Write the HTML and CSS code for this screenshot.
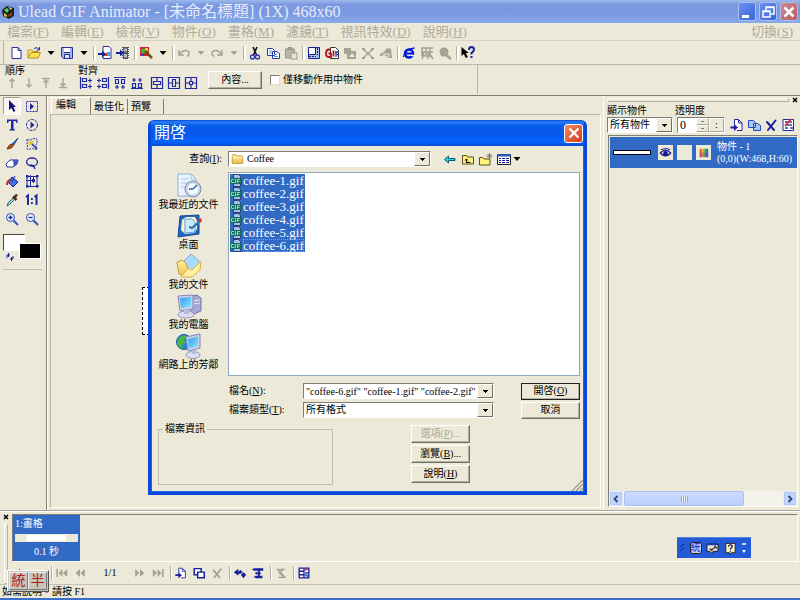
FILE: index.html
```html
<!DOCTYPE html>
<html lang="zh-Hant">
<head>
<meta charset="utf-8">
<title>Ulead GIF Animator - [未命名標題] (1X) 468x60</title>
<link rel="stylesheet" href="styles.css">
</head>
<body>
<svg class="sprite" aria-hidden="true">
  <defs>
    <linearGradient id="screen" x1="0" y1="0" x2="1" y2="1"><stop offset="0" stop-color="#2f9df0"/><stop offset="1" stop-color="#8fe4ff"/></linearGradient>
    <linearGradient id="folder" x1="0" y1="0" x2="0" y2="1"><stop offset="0" stop-color="#fff3a8"/><stop offset="1" stop-color="#eebc4c"/></linearGradient>
    <linearGradient id="rainbow"><stop offset="0" stop-color="#f03030"/><stop offset=".35" stop-color="#e8c030"/><stop offset=".65" stop-color="#30b850"/><stop offset="1" stop-color="#3048e0"/></linearGradient>
  </defs>
  <symbol id="page" viewBox="0 0 16 16"><path d="M4 2.500h6l3 3v8H4z" fill="#fff" stroke="#2a2f9c"/><path d="M10 2.500v3h3" fill="none" stroke="#2a2f9c"/></symbol>
  <symbol id="open" viewBox="0 0 16 16"><path d="M2 13V5h4l1 1.500h5V8" fill="#ffe98a" stroke="#b8921c"/><path d="M2 13l3-5.500h9.500L12 13z" fill="#ffe14a" stroke="#b8921c"/><path d="M8 3.500q3-2 5 .5M13.500 2v3h-3" fill="none" stroke="#2a2f9c"/></symbol>
  <symbol id="save" viewBox="0 0 16 16"><path d="M2.500 2.500h11v11h-9l-2-2z" fill="#9cb8ea" stroke="#2a2f9c"/><path d="M5 3h6v4H5z" fill="#fff"/><path d="M5 7.500h6M5.500 13V9.500h5V13" fill="#dfe6f6" stroke="#2a2f9c"/></symbol>
  <symbol id="down" viewBox="0 0 16 16"><path d="M4.500 6h7L8 10z" fill="currentColor"/></symbol>
  <symbol id="addimg" viewBox="0 0 16 16"><path d="M6 1.500h6l2 2v10H6z" fill="#fff" stroke="#2a2f9c"/><path d="M7 8h4v3H7z" fill="#e03a2a"/><path d="M10 7h3v4h-3z" fill="#30a8e0"/><path d="M1 8h4V5.500L9 9l-4 3.500V10H1z" fill="#18209c"/></symbol>
  <symbol id="addfilm" viewBox="0 0 16 16"><path d="M7 2h7v12H7z" fill="#555"/><path d="M9 3.500h3v3H9zM9 9h3v3.500H9z" fill="#b8bcc8"/><path d="M7.500 3v11M13.500 3v11" stroke="#fff" stroke-dasharray="1 1"/><path d="M1 7h4V4.500L9 8l-4 3.500V9H1z" fill="#18209c"/></symbol>
  <symbol id="wizard" viewBox="0 0 16 16"><path d="M2 2h9v9H2z" fill="#c82828"/><path d="M3 4h4v4H3z" fill="#28c040"/><path d="M7 3h3v3H7z" fill="#f0d020"/><path d="M3 9h3v2H3z" fill="#3048d8"/><path d="M7 6l7 7" stroke="#7a4a18" stroke-width="2.500"/></symbol>
  <symbol id="undo" viewBox="0 0 16 16"><path d="M3 5v5h5M3.500 9.500Q6 5.500 10 5.500q4 1 3 4l-2 2" fill="none" stroke="currentColor" stroke-width="1.500"/></symbol>
  <symbol id="redo" viewBox="0 0 16 16"><path d="M13 5v5H8M12.500 9.500Q10 5.500 6 5.500q-4 1-3 4l2 2" fill="none" stroke="currentColor" stroke-width="1.500"/></symbol>
  <symbol id="cut" viewBox="0 0 16 16"><path d="M6 2l3.500 8M10 2L6.500 10" stroke="#111" stroke-width="1.600"/><circle cx="5.500" cy="12" r="2" fill="none" stroke="#2a38b0" stroke-width="1.300"/><circle cx="10.500" cy="12" r="2" fill="none" stroke="#2a38b0" stroke-width="1.300"/></symbol>
  <symbol id="copy" viewBox="0 0 16 16"><path d="M2.500 3.500h5l2 2v5h-7zM7.500 6.500h4l3 2v5h-7z" fill="#fff" stroke="#2a38b0"/><path d="M4 6h3M4 8h3M9 9.500h3M9 11.500h4" stroke="#4aa0d8"/></symbol>
  <symbol id="paste" viewBox="0 0 16 16"><path d="M2.500 4h9v9h-9zM5 2.500h4v2H5z" fill="#b8b5a6" stroke="#9a978a"/><path d="M8 8h6v6H8z" fill="#e6e3d4" stroke="#9a978a"/></symbol>
  <symbol id="panelic" viewBox="0 0 16 16"><path d="M2.500 2.500h11v11h-11z" fill="#a8bcec" stroke="#1a2090"/><path d="M2.500 2.500h7v7h-7z" fill="#fff" stroke="#1a2090"/><path d="M11.500 3v7M3 11.500h7" stroke="#1a2090" stroke-dasharray="2 1"/></symbol>
  <symbol id="gifopt" viewBox="0 0 16 16"><path d="M6.500 2.500h5l3 3v8h-8z" fill="#fff" stroke="#333"/><path d="M7 4.500H4.500Q2 5 2 8.500T4.500 12H7V8.500H4.500" fill="none" stroke="#b01820" stroke-width="1.800"/><path d="M9.500 5.500v6" stroke="#b01820" stroke-width="1.800"/><path d="M12 12V7M11 7h3M12 9.500h2" stroke="#2840c0" stroke-width="1.300"/></symbol>
  <symbol id="grayimg" viewBox="0 0 16 16"><path d="M2 3h7v3h5v8H5V9H2z" fill="#a5a294"/><path d="M7 12l3-4 3 4z" fill="#eceadb"/></symbol>
  <symbol id="cross" viewBox="0 0 16 16"><path d="M3 4l10 9M13 4L3 13" stroke="#a5a294" stroke-width="1.500"/><path d="M2 3h3v2H2zM11 3h3v2h-3zM2 12h3v2H2zM11 12h3v2h-3z" fill="#a5a294"/></symbol>
  <symbol id="graycloud" viewBox="0 0 16 16"><path d="M2 9l4-2 3-4 4 1 1 9H9l-2-3-5 1z" fill="#a5a294"/><path d="M5 9h6v3H8" fill="none" stroke="#eceadb"/></symbol>
  <symbol id="ie" viewBox="0 0 16 16"><circle cx="8" cy="8.500" r="4" fill="none" stroke="#0018d8" stroke-width="2.500"/><path d="M5 8.500h7" stroke="#0018d8" stroke-width="2"/><path d="M2.500 12Q4 4 13.500 3" fill="none" stroke="#0018d8" stroke-width="1.300"/><path d="M10 10.500h4" stroke="#ece9d8" stroke-width="1.500"/></symbol>
  <symbol id="graygrid" viewBox="0 0 16 16"><path d="M2 3h12M2 7h12M3 3v8M7 3v8M11 3v8M5 7l-2 7M9 8v6M10 8l4 6M3 11h10" stroke="#a5a294" stroke-width="1.500"/></symbol>
  <symbol id="grayglobe" viewBox="0 0 16 16"><circle cx="7" cy="7" r="4.500" fill="#a5a294"/><path d="M8 9l6 5M4 10h7" stroke="#a5a294" stroke-width="2.500"/></symbol>
  <symbol id="help" viewBox="0 0 16 16"><path d="M1.500 2v9l2.300-2 2 4 2-1-2-4h3z" fill="#000"/><path d="M9 5q0-3 2.500-3T14 4.500Q14 6 11.500 8v1.500M11.500 11v2" fill="none" stroke="#18209c" stroke-width="2"/></symbol>

  <symbol id="up1" viewBox="0 0 16 16"><path d="M8 13V4M5.500 6.500L8 4l2.500 2.500" fill="none" stroke="#aaa799" stroke-width="1.500"/></symbol>
  <symbol id="dn1" viewBox="0 0 16 16"><path d="M8 3v9M5.500 9.500L8 12l2.500-2.500" fill="none" stroke="#aaa799" stroke-width="1.500"/></symbol>
  <symbol id="up2" viewBox="0 0 16 16"><path d="M4 3.500h8M8 13V5M5.500 7.500L8 5l2.500 2.500" fill="none" stroke="#aaa799" stroke-width="1.500"/></symbol>
  <symbol id="dn2" viewBox="0 0 16 16"><path d="M4 12.500h8M8 3v8M5.500 8.500L8 11l2.500-2.500" fill="none" stroke="#aaa799" stroke-width="1.500"/></symbol>
  <symbol id="alL" viewBox="0 0 16 16"><path d="M2.500 2v12M4.500 3.500h4v3h-4zM4.500 9.500h4v3h-4zM10 5.500h4M12 3.500v4M10 11.500h4M12 9.500v4" fill="none" stroke="#2028a0" stroke-width="1.200"/></symbol>
  <symbol id="alR" viewBox="0 0 16 16"><path d="M13.500 2v12M7.500 3.500h4v3h-4zM7.500 9.500h4v3h-4zM2 5.500h4M4 3.500v4M2 11.500h4M4 9.500v4" fill="none" stroke="#2028a0" stroke-width="1.200"/></symbol>
  <symbol id="alT" viewBox="0 0 16 16"><path d="M2 2.500h12M3.500 4.500h3v4h-3zM9.500 4.500h3v4h-3zM5 10v4M3 12h4M11 10v4M9 12h4" fill="none" stroke="#2028a0" stroke-width="1.200"/></symbol>
  <symbol id="alB" viewBox="0 0 16 16"><path d="M2 13.500h12M3.500 8.500h3v4h-3zM9.500 8.500h3v4h-3zM5 3v4M3 5h4M11 3v4M9 5h4" fill="none" stroke="#2028a0" stroke-width="1.200"/></symbol>
  <symbol id="ceV" viewBox="0 0 16 16"><path d="M2.500 2.500h11v11h-11zM4.500 6.500h7v3h-7zM8 3v3M8 10v3" fill="none" stroke="#2028a0" stroke-width="1.200"/></symbol>
  <symbol id="ceH" viewBox="0 0 16 16"><path d="M2.500 2.500h11v11h-11zM6.500 4.500h3v7h-3zM3 8h3M10 8h3" fill="none" stroke="#2028a0" stroke-width="1.200"/></symbol>
  <symbol id="ceB" viewBox="0 0 16 16"><path d="M2.500 2.500h11v11h-11zM6.500 6.500h3v3h-3zM3 8h3M10 8h3M8 3v3M8 10v3" fill="none" stroke="#2028a0" stroke-width="1.200"/></symbol>

  <symbol id="tPick" viewBox="0 0 16 16"><path d="M5 2v10l2.500-2 2 4 1.800-1-1.900-4H12z" fill="#10187c"/></symbol>
  <symbol id="tMarq" viewBox="0 0 16 16"><path d="M2.500 3.500h11v10h-11z" fill="none" stroke="#2028a0" stroke-dasharray="2 1"/><path d="M6 5v7l4-3.500z" fill="#2028a0"/></symbol>
  <symbol id="tEll" viewBox="0 0 16 16"><circle cx="8" cy="8" r="5.500" fill="none" stroke="#2028a0" stroke-dasharray="3 1"/><path d="M6.500 4.500v7l4-3.500z" fill="#2028a0"/></symbol>
  <symbol id="tText" viewBox="0 0 16 16"><path d="M3 6V2.500h10.500V6h-1L11.500 4H9.500v8l1.500.5v1H5.500v-1L7 12V4H5L4 6z" fill="#2028b0"/></symbol>
  <symbol id="tBrush" viewBox="0 0 16 16"><path d="M14 2L8 8l1.500 1.500z" fill="#3a6fd0" stroke="#2a4a98"/><path d="M8 8q-3 0-5 5 5 0 6.500-3.500z" fill="#b8541c" stroke="#7a3010"/></symbol>
  <symbol id="tWand" viewBox="0 0 16 16"><path d="M3 3q2 2 5 0 3-1 5 0v4q-2 2 0 6-3 1-5-1-3 2-5 1 1-3 0-5z" fill="none" stroke="#2028a0" stroke-dasharray="2 1"/><path d="M7 4v6M4 7h6M5 5l4 4M9 5L5 9" stroke="#e0c020"/><path d="M8 8l5 5" stroke="#2028a0" stroke-width="1.500"/></symbol>
  <symbol id="tErase" viewBox="0 0 16 16"><path d="M6 5h8l-1 4-4 3H3L2 9z" fill="#fff" stroke="#2a2f9c"/><path d="M9 5h5l-1 4-3.500 2.500V8.500z" fill="#3858c8"/></symbol>
  <symbol id="tLasso" viewBox="0 0 16 16"><ellipse cx="8" cy="7" rx="5.500" ry="4" fill="none" stroke="#2028a0" stroke-width="1.300"/><path d="M6 10q4 0 5 4" fill="none" stroke="#2028a0" stroke-width="1.300"/></symbol>
  <symbol id="tFill" viewBox="0 0 16 16"><path d="M8 4l6 5-5 5-5-5z" fill="#3a78e0" stroke="#18209c"/><path d="M8 9l3-6" stroke="#18209c"/><path d="M6 6q-4 1-4 6l2 0q0-3 3-4z" fill="#c82830"/></symbol>
  <symbol id="tTrans" viewBox="0 0 16 16"><path d="M3 3.500h10v10H3zM6.500 2v12M2 7.500h8M9.500 4v6" fill="none" stroke="#2028a0"/><path d="M2 2h2.500v2.500H2zM12 2h2.500v2.500H12zM2 12h2.500v2.500H2zM12 12h2.500v2.500H12zM8 6h3v3H8z" fill="#2028a0"/></symbol>
  <symbol id="tDrop" viewBox="0 0 16 16"><path d="M3 14l1-3 5-5 1.500 1.500-5 5z" fill="#9ad8d8" stroke="#2c6a70"/><path d="M9 4.500L12.500 8M10 6l3-3.500" stroke="#5c2a14" stroke-width="2.500"/></symbol>
  <symbol id="tOne" viewBox="0 0 16 16"><path d="M2 5l2-1.500V13M10.500 5l2-1.500V13" fill="none" stroke="#2028a0" stroke-width="2"/><path d="M7 6h1.800v2H7zM7 10h1.800v2H7z" fill="#2028a0"/></symbol>
  <symbol id="tZin" viewBox="0 0 16 16"><circle cx="6.500" cy="6.500" r="4" fill="#eef2ff" stroke="#2a48b0"/><path d="M4.500 6.500h4M6.500 4.500v4" stroke="#18209c" stroke-width="1.300"/><path d="M9.500 9.500L14 14" stroke="#2a58c0" stroke-width="2"/></symbol>
  <symbol id="tZout" viewBox="0 0 16 16"><circle cx="6.500" cy="6.500" r="4" fill="#eef2ff" stroke="#2a48b0"/><path d="M4.500 6.500h4" stroke="#18209c" stroke-width="1.300"/><path d="M9.500 9.500L14 14" stroke="#2a58c0" stroke-width="2"/></symbol>

  <symbol id="newobj" viewBox="0 0 16 16"><path d="M5.500 8V2.500h4l3.500 3.500v7.500H8" fill="#fff" stroke="#2028a0"/><path d="M9.500 2.500V6H13" fill="none" stroke="#2028a0"/><path d="M1.500 9.500H5V7l4 3.500L5 14v-2.500H1.500z" fill="#18209c"/></symbol>
  <symbol id="dup" viewBox="0 0 16 16"><path d="M2.500 3.500h5l2 2v5h-7zM7.500 6.500h4l3 2v5h-7z" fill="#a8c8f4" stroke="#2a48b8"/></symbol>
  <symbol id="del" viewBox="0 0 16 16"><path d="M4 5l7 8M12.500 3.500L5 13" stroke="currentColor" stroke-width="2" stroke-linecap="round"/></symbol>
  <symbol id="prop" viewBox="0 0 16 16"><path d="M3 2.500h10.500v11H3z" fill="#fff" stroke="#2028a0"/><path d="M5 5h7M5 8h7M5 11h3M10 11h3" stroke="#3040b0" stroke-width="1.500"/><path d="M11 2L5 9" stroke="#e02828" stroke-width="1.800"/></symbol>
  <symbol id="eye" viewBox="0 0 16 16"><path d="M2 9q6-7 12 0M3 9q5 5 10 0" fill="none" stroke="#10188c" stroke-width="1.500"/><circle cx="8" cy="9" r="2.500" fill="#10188c"/><path d="M3 5q5-3 10 0" fill="none" stroke="#10188c"/></symbol>
  <symbol id="color" viewBox="0 0 16 16"><path d="M4 4h9v9H4z" fill="url(#rainbow)"/><path d="M4 8h9v5H4z" fill="#8030c0" opacity=".35"/></symbol>

  <symbol id="first" viewBox="0 0 16 16"><path d="M2.500 3.500v9" stroke="currentColor" stroke-width="1.800"/><path d="M8.500 3.500v9L4 8zM14 3.500v9L9 8z" fill="currentColor"/></symbol>
  <symbol id="prev" viewBox="0 0 16 16"><path d="M8 3.500v9L3 8zM13.500 3.500v9L8.500 8z" fill="currentColor"/></symbol>
  <symbol id="next" viewBox="0 0 16 16"><path d="M8 3.500v9L13 8zM2.500 3.500v9L7.500 8z" fill="currentColor"/></symbol>
  <symbol id="last" viewBox="0 0 16 16"><path d="M13.500 3.500v9" stroke="currentColor" stroke-width="1.800"/><path d="M7.500 3.500v9L12 8zM2 3.500v9L7 8z" fill="currentColor"/></symbol>
  <symbol id="play" viewBox="0 0 16 16"><path d="M6 3v10l5-5z" fill="#222"/></symbol>
  <symbol id="stop" viewBox="0 0 16 16"><path d="M5 5h7v7H5z" fill="#a5a294"/></symbol>
  <symbol id="dupf" viewBox="0 0 16 16"><path d="M2.500 3h8v7h-8z" fill="#fff" stroke="#18209c" stroke-width="1.700"/><path d="M6.500 7h7.500v6.500H6.500z" fill="#fff" stroke="#18209c" stroke-width="1.700"/></symbol>
  <symbol id="tween" viewBox="0 0 16 16"><path d="M1 7l5-4v3l3-1.500 2 2.500-3 2H6v2zM9 10l3-3 3 3-3 4z" fill="#18209c"/></symbol>
  <symbol id="rev" viewBox="0 0 16 16"><path d="M3.500 2.500H14v3H3.500L1 4zM5 7h6v2.500H5zM6 11h7v3H6l-3-1.500z" fill="#18209c"/><path d="M9 3v9" stroke="#18209c" stroke-width="2"/></symbol>
  <symbol id="grays" viewBox="0 0 16 16"><path d="M3 4h8L6 8l6 5H5M4 4l9 9" fill="none" stroke="#a5a294" stroke-width="1.500"/></symbol>
  <symbol id="sync" viewBox="0 0 16 16"><path d="M2.500 2.500h11v11h-11zM2.500 6h5M2.500 10h5M8 3v10" fill="#fff" stroke="#18209c" stroke-width="1.500"/><path d="M10 7.500h3v4h-3z" fill="#9ab8f0" stroke="#18209c"/><path d="M9 5l4-2" stroke="#d02838" stroke-width="1.500"/></symbol>

  <symbol id="fold" viewBox="0 0 16 16"><path d="M2 13V4q0-1 1-1h3l1.500 1.500H13q1 0 1 1V13z" fill="url(#folder)" stroke="#c8962c"/><path d="M2.500 6.500h11" stroke="#fffbe0"/></symbol>
  <symbol id="gif" viewBox="0 0 12 13"><path d="M3.500.5h5l2 2v10h-7z" fill="#a8bcec" stroke="#28406c"/><path d="M0 4h12v6H0z" fill="#14705c"/><path d="M4 5.500H1.500v3H4V7.500M5.500 5v4M7.500 9V5.500H10M7.500 7.500h2" fill="none" stroke="#b8e8d8" stroke-width=".8"/></symbol>
  <symbol id="back" viewBox="0 0 16 16"><path d="M2.500 8.500L6.500 5v2.500H13v2H6.500V12z" fill="#20d8e8" stroke="#105868"/></symbol>
  <symbol id="upfold" viewBox="0 0 16 16"><path d="M2.500 13V4.500h4l1 1.500h6V13z" fill="#fff27c" stroke="#5a5010"/><path d="M6.500 12V8M5 9.500L6.500 8 8 9.500M6.500 11.500h4" fill="none" stroke="#000"/></symbol>
  <symbol id="newfold" viewBox="0 0 16 16"><path d="M1.500 14V6.500h3L6 8h6V14z" fill="#fff27c" stroke="#5a5010"/><path d="M11.500 2v6M8.500 5h6M9.500 3l4 4M13.500 3l-4 4" stroke="#666" stroke-width=".8"/></symbol>
  <symbol id="views" viewBox="0 0 16 16"><path d="M1.500 3.500h13v10h-13z" fill="#fff" stroke="#222"/><path d="M1.500 3h13v2.500h-13z" fill="#2858b8"/><path d="M3 7.500h2M6 7.500h3M10 7.500h3M3 9.500h2M6 9.500h3M10 9.500h3M3 11.500h2M6 11.500h3M10 11.500h3" stroke="#18209c"/></symbol>

  <symbol id="recent" viewBox="0 0 28 26"><path d="M3 1h13l5 5v17H3z" fill="#eaf4ff" stroke="#8cb0dc"/><path d="M16 1v5h5M6 6h8M6 10h10M6 14h8" fill="none" stroke="#a8c8ec"/><circle cx="18" cy="16" r="8" fill="#c6d2e2" stroke="#7e90ac"/><circle cx="18" cy="16" r="5.500" fill="#f6fbff"/><path d="M18 16l4-4M18 16h-4" stroke="#3060a0" stroke-width="1.500"/></symbol>
  <symbol id="desk" viewBox="0 0 28 26"><path d="M5 3l19-1v19L3 24z" fill="#1f66c8" stroke="#174a94"/><path d="M7 7l4-3h9l2 4v8l-3 4-9 1-4-4z" fill="#fff3c0"/><path d="M10 6h7l3 3v10l-10 1z" fill="#cdebff" stroke="#58a0e0"/><path d="M14 14l3 1 8-7" fill="none" stroke="#3070b8" stroke-width="2.200"/><path d="M23 6l3-1 1 3-2 2z" fill="#d04020"/></symbol>
  <symbol id="docs" viewBox="0 0 28 26"><path d="M8 9l8-8 8 7v10H9z" fill="#aadcff" stroke="#78a8e0"/><path d="M2 9l5-2 4 3 2 6v8L4 21z" fill="url(#folder)" stroke="#c89a30"/><path d="M6 24l7-9 4 2 9-9-1 9-8 7z" fill="#fff0a0" stroke="#d8b048"/></symbol>
  <symbol id="pc" viewBox="0 0 28 26"><path d="M16 3l6-1 4 3v13l-7 3-3-2z" fill="#a4a8d4" stroke="#7478ac"/><path d="M18 8l7-1M18 11l7-1" stroke="#e4e6fa"/><path d="M3 3l15-1v14L5 18z" fill="#cdd2ec" stroke="#8088b8"/><path d="M5 5l11-1v10L6 15z" fill="url(#screen)"/><ellipse cx="11" cy="21.500" rx="8" ry="3.500" fill="#dcdff2" stroke="#9498c0"/><path d="M9 17h5v4H9z" fill="#b8bcdc"/></symbol>
  <symbol id="net" viewBox="0 0 28 26"><circle cx="9" cy="9" r="7.500" fill="#2a80dc" stroke="#1c5aa8"/><path d="M3 6q4-5 9-3l-3 4 2 3-4 1 1 5q-5-2-6-6z" fill="#48b840"/><path d="M11 4l14-3v14l-12 3z" fill="#cdd2ec" stroke="#8088b8"/><path d="M13 6l10-2.500V13l-9 2.500z" fill="url(#screen)"/><ellipse cx="18" cy="22" rx="7" ry="3.500" fill="#dcdff2" stroke="#9498c0"/><path d="M17 17h4v4h-4z" fill="#b8bcdc"/></symbol>
</svg>

<div class="app">
  <header class="titlebar">
    <svg class="ic" viewBox="0 0 16 16"><path d="M2 6l5-4 7 2v8l-5 3-6-3z" fill="#1c2420"/><path d="M4 6l3-2 2 2-2 3z" fill="#5cd060"/><path d="M8 3l4 1-1 2z" fill="#d8e8a0"/><path d="M8 11l4-3v3l-3 2z" fill="#a03028"/><path d="M4 9l3 2v2l-3-1z" fill="#d8c840"/></svg>
    <h1>Ulead GIF Animator - [未命名標題] (1X) 468x60</h1>
    <button class="wbtn" aria-label="最小化"><svg viewBox="0 0 16 16"><path d="M3 11h7v3H3z" fill="#fff"/></svg></button>
    <button class="wbtn" aria-label="還原"><svg viewBox="0 0 16 16"><path d="M6 6V3h8v7h-3M6 3.500h8M3 7h7v6H3zM3 7.500h7" fill="none" stroke="#fff" stroke-width="1.500"/></svg></button>
    <button class="wbtn wclose" aria-label="關閉"><svg viewBox="0 0 16 16"><path d="M3.500 3.500l9 9M12.500 3.500l-9 9" stroke="#fff" stroke-width="2.500"/></svg></button>
  </header>

  <nav class="menubar">
    <button>檔案(<u>F</u>)</button><button>編輯(<u>E</u>)</button><button>檢視(<u>V</u>)</button><button>物件(<u>O</u>)</button><button>畫格(<u>M</u>)</button><button>濾鏡(<u>T</u>)</button><button>視訊特效(<u>D</u>)</button><button>說明(<u>H</u>)</button><button class="push">切換(<u>S</u>)</button>
  </nav>

  <div class="toolbar">
    <button aria-label="開新檔案"><svg><use href="#page"/></svg></button><button aria-label="開啟舊檔"><svg><use href="#open"/></svg></button><button class="arr" aria-label="開啟選單"><svg><use href="#down"/></svg></button><button aria-label="儲存"><svg><use href="#save"/></svg></button><button class="arr" aria-label="儲存選單"><svg><use href="#down"/></svg></button><i class="sep"></i>
    <button aria-label="加入影像"><svg><use href="#addimg"/></svg></button><button aria-label="加入視訊"><svg><use href="#addfilm"/></svg></button><i class="sep"></i>
    <button aria-label="精靈"><svg><use href="#wizard"/></svg></button><button class="arr" aria-label="精靈選單"><svg><use href="#down"/></svg></button><i class="sep"></i>
    <button class="off" aria-label="復原"><svg><use href="#undo"/></svg></button><button class="arr off" aria-label="復原選單"><svg><use href="#down"/></svg></button><button class="off" aria-label="重複"><svg><use href="#redo"/></svg></button><button class="arr off" aria-label="重複選單"><svg><use href="#down"/></svg></button><i class="sep"></i>
    <button aria-label="剪下"><svg><use href="#cut"/></svg></button><button aria-label="複製"><svg><use href="#copy"/></svg></button><button aria-label="貼上"><svg><use href="#paste"/></svg></button><i class="sep"></i>
    <button aria-label="畫布大小"><svg><use href="#panelic"/></svg></button><button aria-label="GIF 最佳化"><svg><use href="#gifopt"/></svg></button><button aria-label="編輯影像"><svg><use href="#grayimg"/></svg></button><button aria-label="變形"><svg><use href="#cross"/></svg></button><button aria-label="匯出"><svg><use href="#graycloud"/></svg></button><i class="sep"></i>
    <button aria-label="瀏覽器預覽"><svg><use href="#ie"/></svg></button><button aria-label="格線"><svg><use href="#graygrid"/></svg></button><button aria-label="網路"><svg><use href="#grayglobe"/></svg></button><i class="sep"></i>
    <button aria-label="說明"><svg><use href="#help"/></svg></button>
  </div>

  <div class="attrbar">
    <section class="grp order"><span>順序</span><div>
      <button aria-label="上移"><svg><use href="#up1"/></svg></button><button aria-label="下移"><svg><use href="#dn1"/></svg></button><button aria-label="移至最上"><svg><use href="#up2"/></svg></button><button aria-label="移至最下"><svg><use href="#dn2"/></svg></button></div></section>
    <section class="grp align"><span>對齊</span><div>
      <button aria-label="靠左"><svg><use href="#alL"/></svg></button><button aria-label="靠右"><svg><use href="#alR"/></svg></button><button aria-label="靠上"><svg><use href="#alT"/></svg></button><button aria-label="靠下"><svg><use href="#alB"/></svg></button><button class="gap" aria-label="垂直置中"><svg><use href="#ceV"/></svg></button><button aria-label="水平置中"><svg><use href="#ceH"/></svg></button><button aria-label="置中"><svg><use href="#ceB"/></svg></button></div></section>
    <button class="btn props">內容...</button>
    <label class="check"><input type="checkbox">僅移動作用中物件</label>
  </div>

  <main class="work">
    <aside class="tools">
      <div class="toolgrid">
        <button class="on" aria-label="挑選"><svg><use href="#tPick"/></svg></button><button aria-label="矩形選取"><svg><use href="#tMarq"/></svg></button>
        <button aria-label="文字"><svg><use href="#tText"/></svg></button><button aria-label="橢圓選取"><svg><use href="#tEll"/></svg></button>
        <button aria-label="筆刷"><svg><use href="#tBrush"/></svg></button><button aria-label="魔術棒"><svg><use href="#tWand"/></svg></button>
        <button aria-label="橡皮擦"><svg><use href="#tErase"/></svg></button><button aria-label="套索"><svg><use href="#tLasso"/></svg></button>
        <button aria-label="填色"><svg><use href="#tFill"/></svg></button><button aria-label="變形"><svg><use href="#tTrans"/></svg></button>
        <button aria-label="滴管"><svg><use href="#tDrop"/></svg></button><button aria-label="實際大小"><svg><use href="#tOne"/></svg></button>
        <button aria-label="放大"><svg><use href="#tZin"/></svg></button><button aria-label="縮小"><svg><use href="#tZout"/></svg></button>
      </div>
      <div class="swatches"><i class="fg"></i><i class="bg"></i><svg viewBox="0 0 8 8"><path d="M1 5V2h3M2.500 0v4M4 6h3V3M5.500 4v4" fill="none" stroke="#18209c"/></svg></div>
    </aside>

    <section class="editor">
      <div class="tabs"><button class="cur">編輯</button><button>最佳化</button><button>預覽</button></div>
      <div class="stage"><div class="canvas"></div></div>
    </section>

    <aside class="objects">
      <div class="grip"><i></i><button aria-label="關閉面板"><svg viewBox="0 0 6 6"><path d="M1 1l4 4M5 1L1 5" stroke="#000" stroke-width="1.500"/></svg></button></div>
      <div class="objbar">
        <div class="field show"><label for="show">顯示物件</label><div class="combo"><select id="show"><option>所有物件</option></select></div></div>
        <div class="field alpha"><label for="alpha">透明度</label><div class="spin"><input id="alpha" type="text" value="0"><span class="ud"><button aria-label="增加"></button><button aria-label="減少"></button></span><button class="more" aria-label="滑桿">:</button></div></div>
        <div class="objbtns">
          <button aria-label="新增物件"><svg><use href="#newobj"/></svg></button><button aria-label="複製物件"><svg><use href="#dup"/></svg></button><button class="navy" aria-label="刪除物件"><svg><use href="#del"/></svg></button><button aria-label="物件屬性"><svg><use href="#prop"/></svg></button>
        </div>
      </div>
      <div class="objlist">
        <div class="objrow">
          <i class="thumb"></i>
          <span class="cell"><svg><use href="#eye"/></svg></span><span class="cell"></span><span class="cell"><svg><use href="#color"/></svg></span>
          <p>物件 - 1<br>(0,0)(W:468,H:60)</p>
        </div>
        <div class="hscroll">
          <button aria-label="向左"><svg viewBox="0 0 8 8"><path d="M5.500 1L2.500 4l3 3" fill="none" stroke="#2c4878" stroke-width="1.800"/></svg></button>
          <div class="track"><span class="thumbbar"><i></i></span></div>
          <button aria-label="向右"><svg viewBox="0 0 8 8"><path d="M2.500 1l3 3-3 3" fill="none" stroke="#2c4878" stroke-width="1.800"/></svg></button>
        </div>
      </div>
    </aside>
  </main>

  <section class="frames">
    <div class="vgrip"><button aria-label="關閉畫格面板"><svg viewBox="0 0 6 6"><path d="M1 1l4 4M5 1L1 5" stroke="#000" stroke-width="1.500"/></svg></button><i></i></div>
    <div class="framebody">
      <div class="strip"><div class="frame"><span>1:畫格</span><i></i><b>0.1 秒</b></div></div>
      <div class="player">
        <button aria-label="播放"><svg><use href="#play"/></svg></button><button aria-label="停止"><svg><use href="#stop"/></svg></button><i class="sep"></i>
        <button class="off" aria-label="第一格"><svg><use href="#first"/></svg></button><button class="off" aria-label="上一格"><svg><use href="#prev"/></svg></button><span class="count">1/1</span><button class="off" aria-label="下一格"><svg><use href="#next"/></svg></button><button class="off" aria-label="最後一格"><svg><use href="#last"/></svg></button><i class="sep"></i>
        <button aria-label="新增畫格"><svg><use href="#newobj"/></svg></button><button aria-label="複製畫格"><svg><use href="#dupf"/></svg></button><button class="off" aria-label="刪除畫格"><svg><use href="#del"/></svg></button><i class="sep"></i>
        <button aria-label="補間"><svg><use href="#tween"/></svg></button><button aria-label="反轉"><svg><use href="#rev"/></svg></button><i class="sep"></i>
        <button aria-label="同步"><svg><use href="#grays"/></svg></button><i class="sep"></i>
        <button aria-label="畫格屬性"><svg><use href="#sync"/></svg></button>
      </div>
    </div>
  </section>
  <footer class="status">如需說明，請按 F1</footer>

  <div class="ime"><button>統</button><button>半</button></div>
  <div class="langbar">
    <svg class="dots" viewBox="0 0 6 10"><path d="M4 1v1M2 3v1M4 5v1M2 7v1" stroke="#0c2c90" stroke-width="2"/></svg>
    <button class="tong">統</button>
    <button aria-label="輸入工具"><svg viewBox="0 0 14 14"><path d="M1 2h12v8H8l-2 2-2-2H1z" fill="#e8e6dc" stroke="#111"/><path d="M1 1.500h12v2H1z" fill="#1838b0"/><path d="M5 9l6-4M4 7l3 3M9 4l3 3" stroke="#333" stroke-width="1.300"/></svg></button>
    <button aria-label="說明"><svg viewBox="0 0 14 14"><path d="M2 1.500h10v10H8l-2 2v-2H2z" fill="#fff6b4" stroke="#222"/><path d="M5 5q0-2 2-2t2 1.700Q9 6 7 7v1M7 9.200v1.300" fill="none" stroke="#10188c" stroke-width="1.400"/></svg></button>
    <svg class="opts" viewBox="0 0 6 12"><path d="M1 2h4" stroke="#fff" stroke-width="1.500"/><path d="M1 8h4L3 11z" fill="#fff"/></svg>
  </div>

  <section class="dialog" role="dialog" aria-labelledby="dlgtitle">
    <header><h2 id="dlgtitle">開啓</h2><button class="dclose" aria-label="關閉"><svg viewBox="0 0 16 16"><path d="M3.500 3.500l9 9M12.500 3.500l-9 9" stroke="#fff" stroke-width="2.200"/></svg></button></header>
    <div class="dbody">
      <label class="looklabel" for="look">查詢(<u>I</u>):</label>
      <div class="lookrow">
        <div class="combo look"><svg><use href="#fold"/></svg><select id="look"><option>Coffee</option></select></div>
        <div class="navbtns"><button aria-label="上一頁"><svg><use href="#back"/></svg></button><button aria-label="上一層"><svg><use href="#upfold"/></svg></button><button aria-label="新資料夾"><svg><use href="#newfold"/></svg></button><button class="view" aria-label="檢視"><svg><use href="#views"/></svg><svg class="va"><use href="#down"/></svg></button></div>
      </div>
      <nav class="places">
        <button><svg><use href="#recent"/></svg>我最近的文件</button>
        <button><svg><use href="#desk"/></svg>桌面</button>
        <button><svg><use href="#docs"/></svg>我的文件</button>
        <button><svg><use href="#pc"/></svg>我的電腦</button>
        <button><svg><use href="#net"/></svg>網路上的芳鄰</button>
      </nav>
      <ul class="files">
        <li><svg><use href="#gif"/></svg><span>coffee-1.gif</span></li>
        <li><svg><use href="#gif"/></svg><span>coffee-2.gif</span></li>
        <li><svg><use href="#gif"/></svg><span>coffee-3.gif</span></li>
        <li><svg><use href="#gif"/></svg><span>coffee-4.gif</span></li>
        <li><svg><use href="#gif"/></svg><span>coffee-5.gif</span></li>
        <li><svg><use href="#gif"/></svg><span class="focus">coffee-6.gif</span></li>
      </ul>
      <div class="form">
        <label for="fname">檔名(<u>N</u>):</label>
        <div class="combo"><input id="fname" type="text" value='"coffee-6.gif" "coffee-1.gif" "coffee-2.gif" "coffee-3.gif" "coffee-4.gif" "coffee-5.gif"'></div>
        <button class="btn default">開啓(<u>O</u>)</button>
        <label for="ftype">檔案類型(<u>T</u>):</label>
        <div class="combo"><select id="ftype"><option>所有格式</option></select></div>
        <button class="btn">取消</button>
      </div>
      <div class="extra">
        <fieldset><legend>檔案資訊</legend></fieldset>
        <div class="stack"><button class="btn" disabled>選項(<u>P</u>)...</button><button class="btn">瀏覽(<u>B</u>)...</button><button class="btn">說明(<u>H</u>)</button></div>
      </div>
    </div>
    <svg class="size" viewBox="0 0 12 12"><path d="M1 12L12 1M5 12l7-7M9 12l3-3" stroke="#9c998a" stroke-width="1.300"/></svg>
  </section>
</div>
</body>
</html>
```

FILE: styles.css
```css
:root {
  --face: #ece9d8;
  --dark: #aca899;
  --shadow: #807d72;
  --sel: #316ac5;
  --navy: #18209c;
}

* { box-sizing: border-box; }

body {
  margin: 0;
  background: var(--face);
  color: #000;
  font: 10px/12px "Liberation Serif", "Noto Sans CJK TC", serif;
}

button, input, select { font: inherit; color: inherit; margin: 0; }
button { padding: 0; border: 0; background: none; }
h1, h2, p, ul, fieldset { margin: 0; padding: 0; font-weight: normal; }
svg { display: block; width: 16px; height: 16px; flex: none; }
.sprite { position: absolute; width: 0; height: 0; }

.app {
  position: relative;
  display: flex;
  flex-direction: column;
  min-height: 100vh;
  border-bottom: 2px solid #3a70cc;
}

/* title bar */
.titlebar {
  display: flex;
  align-items: center;
  gap: 2px;
  height: 23px;
  padding: 0 2px 0 0;
  background: linear-gradient(#9db9ec, #7b98e0 20%, #7a99e2 60%, #86abe9);
  color: #e6ecfb;
}
.titlebar h1 { flex: 1; font-size: 16px; line-height: 20px; white-space: nowrap; }
.wbtn {
  display: grid;
  place-items: center;
  width: 18px;
  height: 19px;
  margin-left: 1px;
  border: 1px solid #a9c0f0;
  border-radius: 3px;
  background: linear-gradient(135deg, #6b8ff0, #3a66dc);
}
.wclose { background: linear-gradient(135deg, #d08a90, #b45c66); }

/* menu */
.menubar {
  display: flex;
  align-items: center;
  gap: 12px;
  height: 18px;
  padding: 0 7px;
  border-bottom: 1px solid #d6d3c4;
  color: #aeab9b;
  font-size: 13px;
  line-height: 16px;
}
.push { margin-left: auto; }

/* toolbars */
.toolbar {
  display: flex;
  align-items: center;
  height: 23px;
  padding-left: 3px;
  margin-left: 3px;
  border-left: 1px solid #b8b5a6;
}
.toolbar button { display: grid; place-items: center; width: 18px; height: 18px; }
.toolbar .arr { width: 15px; }
.off { color: #a5a294; }
.navy { color: var(--navy); }
.sep { flex: none; width: 5px; height: 14px; border-right: 1px solid #fff; box-shadow: inset -1px 0 #b4b1a2; }
.toolbar .sep { border-right-width: 2px; }

.attrbar {
  display: flex;
  align-items: center;
  width: 478px;
  height: 30px;
  border-top: 1px solid var(--dark);
  border-right: 1px solid #b8b5a6;
}
.attrbar::before { content: ""; position: absolute; left: 0; right: 0; height: 30px; border-top: 1px solid #bbb8a9; border-bottom: 1px solid var(--shadow); pointer-events: none; }
.grp { align-self: flex-start; }
.grp span { display: block; height: 10px; line-height: 11px; }
.grp div { display: flex; gap: 1px; }
.order { width: 73px; padding-left: 4px; }
.order span { padding-left: 1px; }
.align { width: 130px; padding-left: 5px; }
.gap { margin-left: 3px; }

.btn {
  height: 18px;
  border: 1px solid;
  border-color: #fff #716f64 #716f64 #fff;
  box-shadow: inset -1px -1px #b4b1a2;
  background: var(--face);
  text-align: center;
}
.btn:disabled { color: #aaa798; }
.default { outline: 1px solid #222; outline-offset: -1px; }
.props { width: 54px; margin-left: 5px; }
.check { display: flex; align-items: center; gap: 3px; margin-left: 8px; white-space: nowrap; }
.check input {
  appearance: none;
  width: 10px;
  height: 10px;
  border: 1px solid;
  border-color: var(--shadow) #e4e1d2 #e4e1d2 var(--shadow);
  background: #fff;
}

/* work area */
.work { display: flex; flex: 1; min-height: 0; padding-top: 1px; }
.tools { width: 47px; padding: 1px 4px; border-right: 1px solid var(--shadow); border-top: 1px solid #fff; }
.toolgrid { display: grid; grid-template-columns: 18px 18px; column-gap: 2px; grid-template-rows: repeat(7, 1fr); row-gap: 1px; width: 38px; height: 131px; margin-left: -1px; }
.toolgrid button { display: grid; place-items: center; }
.toolgrid .on { border: 1px solid; border-color: #a5a294 #fff #fff #a5a294; background: #f8f6ee; }
.swatches { display: grid; grid-template-columns: 16px 6px 16px; grid-template-rows: 9px 8px 8px; margin: 6px 0 0 -1px; padding-bottom: 10px; border-bottom: 1px solid #c0bdae; }
.swatches i { z-index: 1; border: 1px solid #fff; }
.fg { grid-area: 1 / 1 / 3 / 3; background: #fff; border-color: #444 #fff #fff #444 !important; }
.bg { grid-area: 2 / 2 / 4 / 4; background: #000; }
.swatches svg { grid-area: 3 / 1; width: 8px; height: 8px; margin: 2px 0 0 3px; }

.editor { display: flex; flex-direction: column; flex: 1; min-width: 0; padding: 2px 2px 2px 2px; border-left: 1px solid #fff; }
.tabs { display: flex; align-items: flex-end; height: 17px; padding-left: 1px; }
.tabs button { height: 15px; padding: 0 3px; border-right: 1px solid var(--shadow); }
.tabs .cur { height: 17px; width: 40px; border-left: 1px solid #fff; border-top: 1px solid #fff; padding: 0 13px 2px 3px; white-space: nowrap; }
.tabs button:last-child { padding: 0 12px 0 3px; }
.stage { display: grid; flex: 1; place-items: center; border: 1px solid; border-color: #b8b5a6 #fff #fff #b8b5a6; }
.canvas { width: 67%; height: 48px; border: 1px dashed #000; background: #fff; }

/* object panel */
.objects { display: flex; flex-direction: column; width: 197px; padding: 2px 2px 3px 3px; border-left: 1px solid #fff; }
.grip { display: flex; align-items: center; gap: 3px; height: 6px; }
.grip i { flex: 1; height: 4px; border: 1px solid; border-color: #fff #b4b1a2 #b4b1a2 #fff; }
.grip button svg, .vgrip svg { width: 6px; height: 6px; }
.objbar { display: flex; align-items: flex-end; gap: 4px; height: 30px; }
.field label { display: block; height: 13px; line-height: 13px; white-space: nowrap; }
.alpha label { margin-left: -2px; }
.show { width: 66px; }
.alpha { width: 48px; }
.objbtns { display: flex; gap: 1px; }
.objbtns button { width: 16px; }

.combo {
  position: relative;
  display: flex;
  align-items: center;
  height: 16px;
  border: 1px solid;
  border-color: var(--shadow) #fff #fff var(--shadow);
  background: #fff;
}
.combo::after {
  content: "";
  position: absolute;
  top: 0;
  right: 0;
  bottom: 0;
  width: 14px;
  border: 1px solid;
  border-color: #fff #716f64 #716f64 #fff;
  background: linear-gradient(#000, #000) 50% 5px / 5px 1px no-repeat, linear-gradient(#000, #000) 50% 6px / 3px 1px no-repeat, linear-gradient(#000, #000) 50% 7px / 1px 1px no-repeat, var(--face);
  pointer-events: none;
}
.combo select, .combo input {
  appearance: none;
  flex: 1;
  min-width: 0;
  height: 14px;
  padding: 0 2px;
  border: 0;
  border-right: 14px solid transparent;
  background: transparent;
  outline: none;
}

.spin { display: flex; height: 16px; border: 1px solid; border-color: var(--shadow) #fff #fff var(--shadow); background: #fff; }
.spin input { width: 18px; border: 0; padding: 0 2px; background: transparent; font-size: 12px; }
.ud { display: flex; flex-direction: column; flex: 1; }
.ud button, .more { flex: 1; border: 1px solid; border-color: #fff var(--dark) var(--dark) #fff; background: var(--face); }
.ud button { background: linear-gradient(#777, #777) center / 3px 1px no-repeat, var(--face); }
.more { line-height: 12px; }

.objlist { display: flex; flex-direction: column; flex: 1; margin: 2px 0 0 1px; border: 1px solid; border-color: var(--shadow) #fff #fff var(--shadow); }
.objrow { display: flex; align-items: center; gap: 4px; height: 31px; margin: 1px 0 0 1px; padding-left: 3px; background: var(--sel); color: #fff; }
.objrow p { flex: 1; margin-left: 2px; line-height: 12px; white-space: nowrap; }
.thumb { width: 38px; height: 5px; margin-right: 3px; border: 1px solid #000; background: #fff; }
.cell { width: 15px; height: 15px; background: var(--face); overflow: hidden; }
.cell svg { width: 15px; height: 15px; }
.hscroll { display: flex; height: 15px; margin-top: auto; }
.hscroll > button { display: grid; place-items: center; width: 14px; border: 1px solid #e4ecff; border-radius: 2px; background: #c1d2fb; box-shadow: inset 0 0 0 1px #b4c8f6; }
.hscroll svg { width: 8px; height: 8px; }
.track { flex: 1; background: #f4f3ea; padding: 0 1px; }
.thumbbar { display: grid; place-items: center; width: 76%; height: 15px; border: 1px solid #a9bff2; border-radius: 2px; background: linear-gradient(#cddcff, #bacefb); }
.thumbbar i { width: 7px; height: 6px; background: repeating-linear-gradient(90deg, #8fa9e0 0 1px, #e8f0ff 1px 2px); }

/* frame panel */
.frames { display: flex; gap: 2px; height: 74px; padding: 3px 2px 0; border-top: 1px solid var(--dark); box-shadow: inset 0 1px #fff; }
.vgrip { display: flex; flex-direction: column; align-items: center; gap: 4px; width: 8px; }
.vgrip i { flex: 1; width: 4px; border: 1px solid; border-color: #fff #b4b1a2 #b4b1a2 #fff; }
.framebody { flex: 1; }
.strip { height: 48px; border: 1px solid; border-color: var(--shadow) #fff #fff var(--shadow); }
.frame { display: flex; flex-direction: column; gap: 4px; width: 67px; height: 46px; padding: 3px 2px; background: var(--sel); color: #fff; }
.frame i { height: 8px; border: 0 solid var(--face); border-width: 1px 12px; background: #fff; }
.frame b { font-weight: normal; text-align: center; }
.player { display: flex; align-items: center; height: 21px; }
.player button { width: 18px; display: grid; place-items: center; }
.player button svg { width: 14px; height: 14px; }
.count { width: 42px; text-align: center; }

.status { height: 14px; padding-left: 2px; border-top: 1px solid #c4c1b2; line-height: 14px; }

/* floating input method bars */
.ime { position: absolute; left: 7px; bottom: 6px; display: flex; padding: 1px; border: 1px solid; border-color: #fff #555 #555 #fff; background: #c8c5ba; }
.ime button { width: 19px; height: 18px; border: 1px solid; border-color: #eee #777 #777 #eee; color: #b01c1c; font-size: 14px; line-height: 16px; }
.langbar { position: absolute; right: 49px; bottom: 40px; display: flex; align-items: center; justify-content: space-between; width: 74px; height: 21px; padding: 0 4px 0 2px; border-top: 1px solid #4c86e4; background: #225ad8; }
.langbar svg { width: 13px; height: 13px; }
.langbar .dots { width: 6px; height: 10px; }
.langbar .opts { width: 6px; height: 12px; }
.tong { width: 12px; height: 12px; border: 1px solid #222; border-radius: 2px; background: #c4cdf0; color: #1a24c0; line-height: 10px; }

/* open dialog */
.dialog {
  position: absolute;
  left: 148px;
  top: 120px;
  width: 439px;
  height: 375px;
  border: 3px solid #0a48dc;
  border-top: 0;
  border-radius: 6px 6px 0 0;
  background: var(--face);
  box-shadow: inset 0 0 0 1px #1c62f0;
  overflow: hidden;
}
.dialog header { display: flex; align-items: center; justify-content: space-between; height: 26px; padding: 0 1px 0 3px; background: linear-gradient(#0a48c8, #2a80fa 8%, #0a5ce8 20%, #0458ee 60%, #0066ff 85%, #0848cc); color: #fff; }
.dialog h2 { font-size: 16px; line-height: 24px; font-weight: normal; }
.dclose { display: grid; place-items: center; width: 19px; height: 19px; border: 1px solid #fff; border-radius: 3px; background: linear-gradient(135deg, #f08c68, #d83c14); }
.dbody { display: grid; grid-template-columns: 77px 1fr; grid-template-rows: 26px 204px auto auto; padding-right: 4px; }
.looklabel { align-self: center; text-align: right; padding-right: 6px; }
.lookrow { display: flex; align-items: center; gap: 11px; }
.look { width: 203px; }
.look svg { margin-left: 1px; width: 15px; height: 14px; }
.navbtns { display: flex; gap: 2px; }
.navbtns button { display: flex; }
.va { margin-left: -3px; }
.places { padding-top: 1px; }
.places button { display: flex; flex-direction: column; align-items: center; width: 75px; height: 40px; line-height: 12px; white-space: nowrap; }
.places svg { width: 28px; height: 26px; }
.files { padding: 1px; border: 1px solid #8fa8c0; background: #fff; list-style: none; font-size: 13px; line-height: 13px; }
.files li { display: flex; align-items: center; gap: 1px; width: 75px; height: 13px; background: var(--sel); color: #fff; white-space: nowrap; }
.files svg { width: 12px; height: 13px; }
.focus { outline: 1px dotted #c89058; outline-offset: -1px; }
.form { grid-column: 2; display: grid; grid-template-columns: 74px 191px 1fr; grid-auto-rows: 16px; row-gap: 3px; align-items: center; padding: 7px 0 0 1px; white-space: nowrap; }
.form .btn { justify-self: end; width: 59px; height: 17px; }
.extra { grid-column: 1 / 3; display: flex; gap: 78px; padding: 5px 0 0 7px; }
.extra fieldset { width: 175px; height: 62px; border: 1px solid #c0bdae; }
.extra legend { margin-left: 4px; padding: 0 2px; line-height: 12px; }
.stack { display: flex; flex-direction: column; gap: 2px; padding-top: 2px; }
.stack .btn { width: 59px; }
.size { position: absolute; right: 1px; bottom: 1px; width: 12px; height: 12px; }
```
